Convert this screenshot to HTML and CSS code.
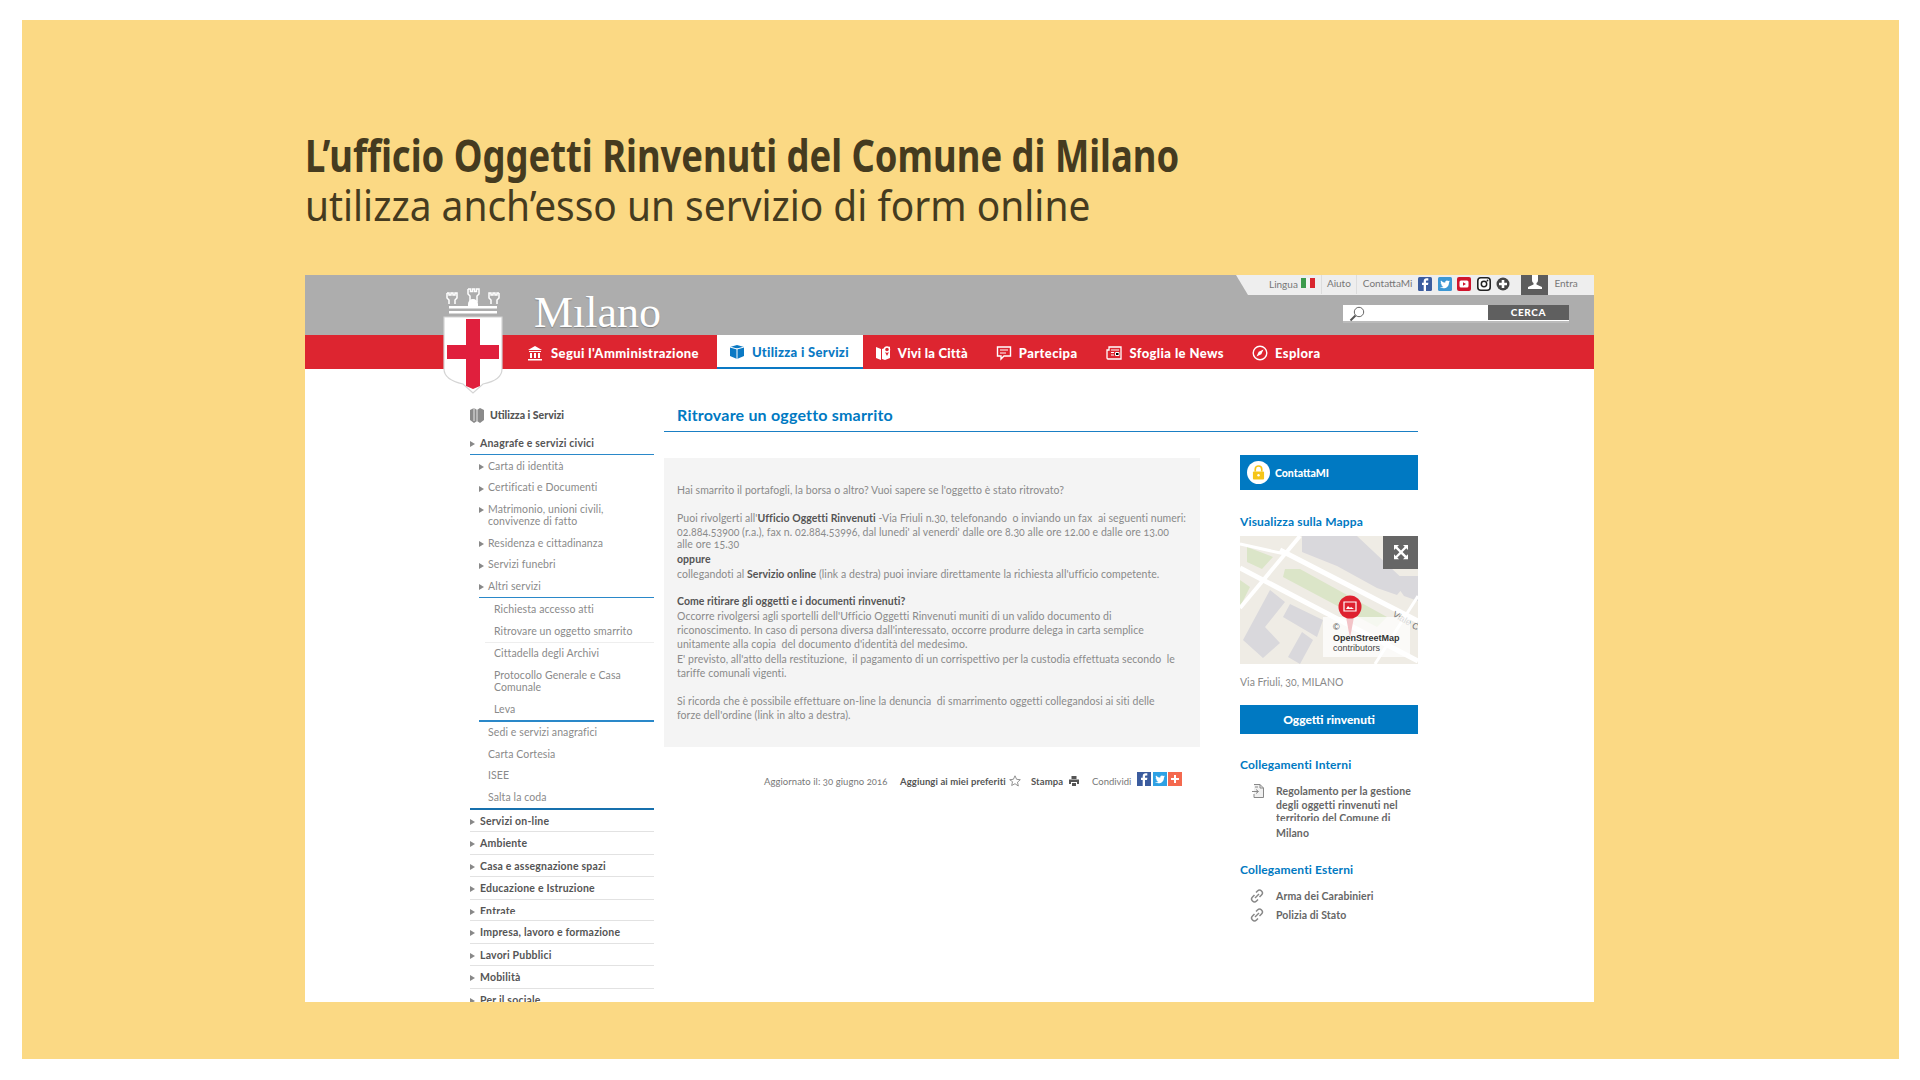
FILE: index.html
```html
<!DOCTYPE html>
<html lang="it">
<head>
<meta charset="utf-8">
<title>Ufficio Oggetti Rinvenuti</title>
<link rel="stylesheet" href="styles.css">
</head>
<body>
<div class="frame">
  <div class="heading">
    <h1 class="h-bold">L’ufficio Oggetti Rinvenuti del Comune di Milano</h1>
    <h2 class="h-light">utilizza anch’esso un servizio di form online</h2>
  </div>
  <div class="shot">
    <svg class="crest" viewBox="0 0 60 110" width="60" height="110">
      <g fill="none" stroke="#fff" stroke-width="1.500">
        <path d="M25 4h2.500v2.500h2V4h2v2.500h2V4H36v5l-2 2v6M25 4v5l2 2v6"/>
        <path d="M4 8h2v2h2V8h2v2h2V8h2v5l-2 2v4M4 8v5l2 2v4"/>
        <path d="M56 8h-2v2h-2V8h-2v2h-2V8h-2v5l2 2v4M56 8v5l-2 2v4"/>
      </g>
      <path d="M6 21h19v-2a5 5 0 0 1 10 0v2h19v2.500H6zM6 26h48v2.500H6z" fill="#fff"/>
      <path d="M1 32h58v52c0 9-9 13-19 15l-10 9-10-9C11 97 1 93 1 84z" fill="#fff" stroke="#d4d4d4" stroke-width="1.200"/>
      <path d="M23 34h14v26h19v14H37v27l-7 3-7-3V74H4V60h19z" fill="#e01f3d"/>
    </svg>
    <div class="mark">Mılano</div>
    <div class="top">
      <div class="util">
        <span>Lingua</span>
        <svg class="flag" viewBox="0 0 14 10" width="14" height="10"><rect width="5" height="10" fill="#3c9a4c"/><rect x="5" width="4" height="10" fill="#f4f4f4"/><rect x="9" width="5" height="10" fill="#d9262e"/></svg>
        <span class="sep">Aiuto</span>
        <span class="sep sep-c">ContattaMi</span>
        <span class="socials">
          <svg viewBox="0 0 14 14" width="14" height="14"><rect width="14" height="14" rx="1.5" fill="#3b5c9e"/><path d="M8 14V8h2l.4-2.3H8V4.400c0-.7.3-1 1-1h1.300V1.300H8.700C6.800 1.300 5.700 2.400 5.700 4.200v1.500H4V8h1.700v6z" fill="#fff"/></svg>
          <svg viewBox="0 0 14 14" width="14" height="14"><rect width="14" height="14" rx="1.5" fill="#3c97d3"/><path d="M2.500 10.500c4 2 8.500 0 8.500-5l1-1.200-1.200.3.800-1.100-1.300.5c-1.200-1.200-3.400-.3-3 1.600C5.500 5.500 4 4.700 3 3.500c-.6 1-.3 2.200.6 2.900l-.9-.3c0 1 .7 1.900 1.700 2.200h-1c.3.800 1 1.300 2 1.400-.8.500-1.800.7-2.900.4z" fill="#fff"/></svg>
          <svg viewBox="0 0 14 14" width="14" height="14"><rect width="14" height="14" rx="2" fill="#d0142c"/><rect x="2.500" y="3.500" width="9" height="7" rx="1.500" fill="#fff"/><path d="M6 5.200v3.600L9 7z" fill="#d0142c"/></svg>
          <svg viewBox="0 0 14 14" width="14" height="14"><rect x=".8" y=".8" width="12.400" height="12.400" rx="3" fill="#fff" stroke="#222" stroke-width="1.600"/><circle cx="7" cy="7" r="2.700" fill="none" stroke="#222" stroke-width="1.500"/><circle cx="10.500" cy="3.500" r=".9" fill="#222"/></svg>
          <svg viewBox="0 0 14 14" width="14" height="14"><circle cx="7" cy="7" r="6.500" fill="#444"/><path d="M5.700 3h2.600v2.700H11v2.600H8.300V11H5.700V8.300H3V5.700h2.700z" fill="#fff"/></svg>
        </span>
        <span class="user"><svg viewBox="0 0 16 16" width="16" height="16"><path d="M5 0h6v5c0 1.500-.6 2.500-1.500 3v1.500L15 12v2H1v-2l5.500-2.500V8C5.600 7.500 5 6.500 5 5z" fill="#fff"/></svg></span>
        <span class="entra">Entra</span>
      </div>
      <div class="search">
        <svg class="lens" viewBox="0 0 16 16" width="16" height="16"><circle cx="10" cy="6" r="4.700" fill="none" stroke="#666" stroke-width="1"/><path d="M6.500 9.500l-5 5" stroke="#555" stroke-width="2"/></svg>
        <span class="cerca">CERCA</span>
      </div>
    </div>
    <nav class="nav">
      <a class="nav-item n1">
        <svg viewBox="0 0 16 16" width="16" height="16"><path d="M8 1l7 4H1zM2 6h12v1H2zM3 8h2v5H3zM7 8h2v5H7zM11 8h2v5h-2zM1 14h14v1.500H1z" fill="#fff"/></svg>
        <span>Segui l'Amministrazione</span></a>
      <a class="nav-item active">
        <svg viewBox="0 0 16 16" width="16" height="16"><path d="M1 3l7-2 7 2v9l-7 3-7-3z" fill="#0a79c4"/><path d="M8 4v11M1 3l7 2 7-2" stroke="#fff" stroke-width="1" fill="none"/></svg>
        <span>Utilizza i Servizi</span></a>
      <a class="nav-item n3">
        <svg viewBox="0 0 16 16" width="16" height="16"><path d="M1 2l5 2v11l-5-2zM7 4l3-1v4l2 4 2-4V2l1-.5V13l-5 2-3-1z" fill="#fff"/><circle cx="12" cy="4.500" r="2.500" fill="none" stroke="#fff" stroke-width="1.400"/></svg>
        <span>Vivi la Città</span></a>
      <a class="nav-item n4">
        <svg viewBox="0 0 16 16" width="16" height="16"><path d="M1.500 2h13v9H8l-3 3v-3H1.500z" fill="none" stroke="#fff" stroke-width="1.400"/><path d="M4 5h8M4 8h6" stroke="#fff" stroke-width="1"/></svg>
        <span>Partecipa</span></a>
      <a class="nav-item">
        <svg viewBox="0 0 16 16" width="16" height="16"><path d="M3 2h12v12H2a1 1 0 0 1-1-1V5h2z" fill="none" stroke="#fff" stroke-width="1.300"/><path d="M5 5h8M5 7.500h3M5 10h3M9.500 7.500H13v3H9.500z" stroke="#fff" stroke-width="1"/></svg>
        <span>Sfoglia le News</span></a>
      <a class="nav-item">
        <svg viewBox="0 0 16 16" width="16" height="16"><circle cx="8" cy="8" r="6.800" fill="none" stroke="#fff" stroke-width="1.400"/><path d="M11.500 4.500L9.300 9.300 4.500 11.500l2.200-4.800z" fill="#fff"/></svg>
        <span>Esplora</span></a>
    </nav>
    <div class="page">
      <aside class="side">
        <div class="side-head">
          <svg viewBox="0 0 14 16" width="14" height="16"><path d="M0 3l4-2 3 2 3-2 4 2v10l-4 3-3-2-3 2-4-3z" fill="#8a8a8a"/><path d="M7 3v11M4 1v13" stroke="#fff" stroke-width=".8"/></svg>
          <span>Utilizza i Servizi</span>
        </div>
        <ul class="menu">
          <li class="l1 open"><i></i>Anagrafe e servizi civici</li>
          <li class="l2"><i></i>Carta di identità</li>
          <li class="l2"><i></i>Certificati e Documenti</li>
          <li class="l2"><i></i>Matrimonio, unioni civili,<br>convivenze di fatto</li>
          <li class="l2"><i></i>Residenza e cittadinanza</li>
          <li class="l2"><i></i>Servizi funebri</li>
          <li class="l2 open-2"><i></i>Altri servizi</li>
          <li class="l3">Richiesta accesso atti</li>
          <li class="l3 ruled">Ritrovare un oggetto smarrito</li>
          <li class="l3">Cittadella degli Archivi</li>
          <li class="l3">Protocollo Generale e Casa<br>Comunale</li>
          <li class="l3 end-3">Leva</li>
          <li class="l2 plain">Sedi e servizi anagrafici</li>
          <li class="l2 plain">Carta Cortesia</li>
          <li class="l2 plain">ISEE</li>
          <li class="l2 plain end-2">Salta la coda</li>
          <li class="l1"><i></i>Servizi on-line</li>
          <li class="l1"><i></i>Ambiente</li>
          <li class="l1"><i></i>Casa e assegnazione spazi</li>
          <li class="l1"><i></i>Educazione e Istruzione</li>
          <li class="l1 cut"><i></i><span>Entrate</span></li>
          <li class="l1"><i></i>Impresa, lavoro e formazione</li>
          <li class="l1"><i></i>Lavori Pubblici</li>
          <li class="l1"><i></i>Mobilità</li>
          <li class="l1"><i></i>Per il sociale</li>
        </ul>
      </aside>
      <main class="main">
        <h3 class="title">Ritrovare un oggetto smarrito</h3>
        <div class="cols">
          <div class="article">
            <div class="panel">
              <p>Hai smarrito il portafogli, la borsa o altro? Vuoi sapere se l'oggetto è stato ritrovato?</p>
              <p>Puoi rivolgerti all'<b>Ufficio Oggetti Rinvenuti</b> -Via Friuli n.30, telefonando&nbsp; o inviando un fax&nbsp; ai seguenti numeri:<br>02.884.53900 (r.a.), fax n. 02.884.53996, dal lunedi' al venerdi' dalle ore 8.30 alle ore 12.00 e dalle ore 13.00<br><span class="cut-top"><span>alle ore 15.30</span></span><b>oppure</b><br>collegandoti al <b>Servizio online</b> (link a destra) puoi inviare direttamente la richiesta all'ufficio competente.</p>
              <p><b>Come ritirare gli oggetti e i documenti rinvenuti?</b><br>Occorre rivolgersi agli sportelli dell'Ufficio Oggetti Rinvenuti muniti di un valido documento di<br>riconoscimento. In caso di persona diversa dall'interessato, occorre produrre delega in carta semplice<br>unitamente alla copia&nbsp; del documento d'identità del medesimo.<br>E' previsto, all'atto della restituzione,&nbsp; il pagamento di un corrispettivo per la custodia effettuata secondo&nbsp; le<br>tariffe comunali vigenti.</p>
              <p>Si ricorda che è possibile effettuare on-line la denuncia&nbsp; di smarrimento oggetti collegandosi ai siti delle<br>forze dell'ordine (link in alto a destra).</p>
            </div>
            <div class="meta">
              <span class="updated">Aggiornato il: 30 giugno 2016</span>
              <b class="fav">Aggiungi ai miei preferiti</b>
              <svg class="star" viewBox="0 0 12 12" width="12" height="12"><path d="M6 .8l1.600 3.500 3.700.4-2.800 2.500.8 3.800L6 8.700l-3.300 1.800.8-3.800L.7 4.700l3.700-.4z" fill="none" stroke="#777" stroke-width=".8"/></svg>
              <b class="print">Stampa</b>
              <svg class="printer" viewBox="0 0 10 10" width="10" height="10"><path d="M2.500 0h5v3h-5zM0 3.500h10V8H8V6H2v2H0zM3 7h4v3H3z" fill="#555"/></svg>
              <span class="share">Condividi</span>
              <span class="share-btns">
                <svg viewBox="0 0 14 14" width="14" height="14"><rect width="14" height="14" fill="#3b5c9e"/><path d="M8 14V8h2l.4-2.300H8V4.400c0-.7.3-1 1-1h1.300V1.300H8.700C6.800 1.300 5.700 2.400 5.700 4.200v1.500H4V8h1.700v6z" fill="#fff"/></svg>
                <svg viewBox="0 0 14 14" width="14" height="14"><rect width="14" height="14" fill="#2ea1e4"/><path d="M2.500 10.500c4 2 8.500 0 8.500-5l1-1.200-1.200.3.800-1.100-1.300.5c-1.200-1.200-3.400-.3-3 1.600C5.500 5.500 4 4.700 3 3.500c-.6 1-.3 2.200.6 2.900l-.9-.3c0 1 .7 1.900 1.700 2.200h-1c.3.800 1 1.300 2 1.400-.8.500-1.800.7-2.900.4z" fill="#fff"/></svg>
                <svg viewBox="0 0 14 14" width="14" height="14"><rect width="14" height="14" fill="#f4694f"/><path d="M6 3h2v3h3v2H8v3H6V8H3V6h3z" fill="#fff"/></svg>
              </span>
            </div>
          </div>
          <aside class="right">
            <div class="contact">
              <span class="lock"><svg viewBox="0 0 14 16" width="13" height="15"><path d="M3.500 7V4.500a3.500 3.500 0 0 1 7 0V7" fill="none" stroke="#f5c518" stroke-width="1.800"/><rect x="1" y="7" width="12" height="8.500" rx="1" fill="#f5c518"/><circle cx="7" cy="11" r="1.300" fill="#fff"/></svg></span>
              <span>ContattaMI</span>
            </div>
            <h4 class="rh rh-map">Visualizza sulla Mappa</h4>
            <div class="map">
              <svg viewBox="0 0 178 128" width="178" height="128">
                <rect width="178" height="128" fill="#efece5"/>
                <g fill="#dbe5c8"><path d="M7 11l26 10-11 12-15-7zM45 33h15l87 48-10 10-94-50zM0 44l10 7-10 20z"/></g>
                <g fill="#d9d8dc"><path d="M62 0h55l50 47-10 12-20-7-40-22-35-14zM30 54l15 12-20 25 15 16-17 15L3 104zM50 68l33 16-6 17-34-20zM62 96l11 8-13 24-12-7zM150 40h28v25l-14-5z"/></g>
                <g fill="none" stroke="#fff">
                  <path d="M0 32l178 93" stroke-width="5"/>
                  <path d="M40 14l138 71" stroke-width="5"/>
                  <path d="M60 0L0 72" stroke-width="4"/>
                  <path d="M0 8l45 10" stroke-width="3"/>
                  <path d="M178 60l-43 68" stroke-width="3"/>
                </g>
                <text class="map-road" x="152" y="80" transform="rotate(30 152 80)">Viale C</text>
                <rect x="83" y="81" width="87" height="40" fill="#fff" fill-opacity=".72"/>
                <path d="M105 76h10l-5 26z" fill="#f3c4c8"/>
                <circle cx="110" cy="71" r="11.500" fill="#de2130"/>
                <path d="M104 66h12v9h-12z" fill="none" stroke="#fff" stroke-width="1.200"/>
                <path d="M106 73l2-3 2 2 1-1 3 2z" fill="#fff"/>
                <rect x="143" y="0" width="35" height="33" fill="#666"/>
                <path d="M154 9h5l-1.700 1.700 3.700 3.700 3.700-3.700L163 9h5v5l-1.700-1.700-3.700 3.700 3.700 3.700L168 18.300v5h-5l1.700-1.700-3.700-3.700-3.700 3.700 1.700 1.700h-5v-5l1.700 1.700 3.700-3.700-3.700-3.700L154 14z" fill="#fff"/>
              </svg>
              <div class="osm">©<br><b>OpenStreetMap</b><br>contributors</div>
            </div>
            <div class="addr">Via Friuli, 30, MILANO</div>
            <div class="cta">Oggetti rinvenuti</div>
            <h4 class="rh rh-int">Collegamenti Interni</h4>
            <div class="link-row">
              <svg viewBox="0 0 12 14" width="12" height="14"><path d="M2 .5h6l3.500 3.500v9.500H2V10" fill="#f0f0f0" stroke="#888" stroke-width="1"/><path d="M8 .5V4h3.500M0 7.500h6M4 5.500l2.500 2-2.500 2M3 3h3" fill="none" stroke="#888" stroke-width="1"/></svg>
              <div class="link-t">Regolamento per la gestione<br>degli oggetti rinvenuti nel<br><span class="cut-bottom"><span>territorio del Comune di</span></span>Milano</div>
            </div>
            <h4 class="rh rh-ext">Collegamenti Esterni</h4>
            <div class="link-row link-a">
              <svg viewBox="0 0 14 14" width="14" height="14"><g fill="none" stroke="#888" stroke-width="1.500"><path d="M6 3.500l1.500-1.500a2.800 2.800 0 0 1 4 4L9.500 8"/><path d="M8 10.500L6.500 12a2.800 2.800 0 0 1-4-4L4.500 6"/><path d="M5 9l4-4"/></g></svg>
              <div class="link-t">Arma dei Carabinieri</div>
            </div>
            <div class="link-row link-b">
              <svg viewBox="0 0 14 14" width="14" height="14"><g fill="none" stroke="#888" stroke-width="1.500"><path d="M6 3.500l1.500-1.500a2.800 2.800 0 0 1 4 4L9.500 8"/><path d="M8 10.500L6.500 12a2.800 2.800 0 0 1-4-4L4.500 6"/><path d="M5 9l4-4"/></g></svg>
              <div class="link-t">Polizia di Stato</div>
            </div>
          </aside>
        </div>
      </main>
    </div>
  </div>
</div>
</body>
</html>
```

FILE: styles.css
```css
* { box-sizing: border-box; }
html, body { margin: 0; padding: 0; background: #fff; }
body { font-family: Lato, "Open Sans", sans-serif; color: #777; height: 1080px; overflow: hidden; font-variant-numeric: oldstyle-nums; }
.frame { margin: 20px 21px 20px 22px; height: 1039px; background: #fbd984; padding: 110px 0 0 283px; overflow: hidden; }
.heading { height: 145px; color: #453b1f; }
.h-bold, .h-light { margin: 0; font-family: "Noto Sans", sans-serif; font-size: 44px; line-height: 50px; white-space: nowrap; transform-origin: left center; }
.h-bold { font-weight: 700; transform: scaleX(.827); }
.h-light { font-weight: 400; font-size: 41px; transform: scaleX(.948); }

.shot { position: relative; width: 1289px; height: 727px; background: #fff; overflow: hidden; }
.crest { position: absolute; left: 138px; top: 10px; }
.mark { position: absolute; left: 229px; top: 13px; font: 44px/50px "Liberation Serif", serif; color: #fff; text-shadow: 0 1px 1px rgba(0,0,0,.25); }

.top { height: 60px; background: #adadad; display: flex; flex-direction: column; align-items: flex-end; }
.util { width: 358px; height: 20px; background: #eeeeee; clip-path: polygon(0 0, 100% 0, 100% 100%, 12px 100%); display: flex; align-items: center; padding: 0 0 2px 33px; font-size: 10px; color: #777; white-space: nowrap; }
.flag { margin: -3px 0 0 3px; }
.sep { height: 20px; line-height: 18px; border-left: 1px solid #ddd; margin-left: 6px; padding-left: 5px; }
.sep-c { margin-left: 5px; padding-left: 6px; }
.socials { display: flex; gap: 5.500px; margin-left: 6px; }
.user { width: 27px; height: 20px; background: #5d5d5d; margin: 2px 0 0 11px; display: flex; justify-content: center; }
.entra { margin: -3px 0 0 6px; }
.search { width: 226px; height: 18px; margin: 10px 25px 0 0; background: #fff; display: flex; align-items: flex-start; justify-content: space-between; border-bottom: 2px solid #bbb; padding-left: 6px; }
.lens { margin-top: 1px; }
.cerca { width: 81px; height: 15px; background: #5f5f5f; color: #fff; font-size: 10px; font-weight: 900; text-align: center; line-height: 15px; letter-spacing: .6px; }

.nav { height: 34px; background: #dd2530; display: flex; padding-left: 210px; }
.nav-item { display: flex; align-items: center; gap: 7px; padding: 1px 16px 0 12px; color: #fff; font-size: 13px; font-weight: 900; white-space: nowrap; letter-spacing: .4px; }
.n1 { gap: 8px; padding-right: 18px; }
.n3 { letter-spacing: .2px; }
.n4 { padding-right: 17px; }
.nav-item.active { background: #fff; color: #0a79c4; border-bottom: 2px solid #0a79c4; padding: 2px 14px 0 12px; letter-spacing: .3px; }

.page { display: flex; padding-left: 165px; }
.side { width: 184px; padding-top: 38px; flex: none; }
.side-head { display: flex; align-items: center; gap: 6px; height: 16px; font-size: 10.500px; font-weight: 900; color: #555; margin-bottom: 9px; }
.menu { list-style: none; margin: 0; padding: 0; font-size: 10.500px; }
.menu i { display: inline-block; width: 0; height: 0; border-left: 5px solid #888; border-top: 3px solid transparent; border-bottom: 3px solid transparent; position: absolute; top: 9px; left: 0; }
.menu li { position: relative; }
.l1 { height: 22.500px; line-height: 22px; padding-left: 10px; font-weight: 700; color: #555; border-bottom: 1px solid #e2e2e2; letter-spacing: .2px; }
.l1.open { height: 23px; line-height: 23px; border-bottom: 1.500px solid #2a88c9; }
.l1.cut { height: 21.500px; }
.l1.cut span { display: block; height: 14px; overflow: hidden; }
.l2 { margin-left: 9px; padding: 4.500px 0 4.500px 9px; line-height: 12.500px; color: #8a8a8a; letter-spacing: .1px; }
.l3 { margin-left: 15px; padding: 4.500px 0 4.500px 9px; line-height: 12.500px; color: #8a8a8a; letter-spacing: .1px; }
.plain { padding-left: 9px; }
.open-2 { border-bottom: 1px solid #2a88c9; margin-bottom: 1px; }
.ruled { border-bottom: 1px solid #eee; }
.end-3 { margin-left: 9px; padding-left: 15px; border-bottom: 2px solid #2a88c9; }
.end-2 { margin-left: 0; padding-left: 18px; border-bottom: 2px solid #1770ad; }

.main { width: 754px; margin-left: 10px; flex: none; }
.title { margin: 0; height: 63px; padding: 37px 0 0 13px; font-size: 16px; line-height: 18px; font-weight: 700; color: #0079c2; border-bottom: 1px solid #1a7fc4; letter-spacing: .2px; }
.cols { display: flex; justify-content: space-between; margin-top: 26px; }
.article { width: 536px; }
.panel { background: #f4f4f4; height: 289px; padding: 25px 13px 0; font-size: 10.500px; line-height: 14.300px; color: #8a8a8a; white-space: nowrap; letter-spacing: .06px; }
.panel p { margin: 0 0 13.500px; }
.panel b { color: #555; font-weight: 700; }
.cut-top { display: block; height: 13px; overflow: hidden; }
.cut-top span { display: block; margin-top: -2px; }
.cut-bottom { display: block; height: 9px; overflow: hidden; line-height: 14px; margin-bottom: 5px; }
.cut-bottom span { display: block; margin-top: -1px; }
.meta { display: flex; align-items: center; height: 14px; margin-top: 27px; padding-left: 100px; font-size: 9.500px; white-space: nowrap; }
.meta b { color: #555; font-weight: 700; letter-spacing: .1px; }
.updated { width: 136px; letter-spacing: .06px; }
.fav { width: 109px; }
.star { margin-right: 10px; }
.print { width: 38px; }
.printer { margin-right: 13px; }
.share { width: 45px; }
.share-btns { display: flex; gap: 1.500px; margin-top: -4px; }

.right { width: 178px; }
.contact { height: 35px; margin-top: -3px; background: #0079c2; color: #fff; display: flex; align-items: center; gap: 5px; padding-left: 7px; font-size: 10.500px; font-weight: 900; }
.lock { width: 23px; height: 23px; border-radius: 50%; background: #fff; display: flex; align-items: center; justify-content: center; }
.rh { margin: 0; font-size: 12px; line-height: 14px; font-weight: 700; color: #0079c2; letter-spacing: .15px; }
.rh-map { margin-top: 25px; }
.map { position: relative; height: 128px; margin-top: 7px; overflow: hidden; }
.map svg { display: block; }
.map-road { font: 9px "Liberation Sans", sans-serif; fill: #777; }
.osm { position: absolute; left: 93px; top: 86px; font: 9px/10.500px "Liberation Sans", sans-serif; color: #444; white-space: nowrap; }
.osm b { color: #333; }
.addr { margin-top: 11px; font-size: 10.500px; line-height: 14px; color: #8a8a8a; }
.cta { height: 29px; margin-top: 16px; background: #0079c2; color: #fff; text-align: center; font-size: 12px; line-height: 29px; font-weight: 900; }
.rh-int { margin-top: 24px; }
.link-row { display: flex; align-items: flex-start; padding-left: 12px; gap: 12px; font-size: 10.500px; line-height: 14px; font-weight: 700; color: #666; margin-top: 12px; letter-spacing: .1px; }
.link-t { white-space: nowrap; }
.rh-ext { margin-top: 23px; }
.link-a { margin-top: 12px; padding-left: 10px; gap: 12px; }
.link-b { margin-top: 5px; padding-left: 10px; gap: 12px; }
```
